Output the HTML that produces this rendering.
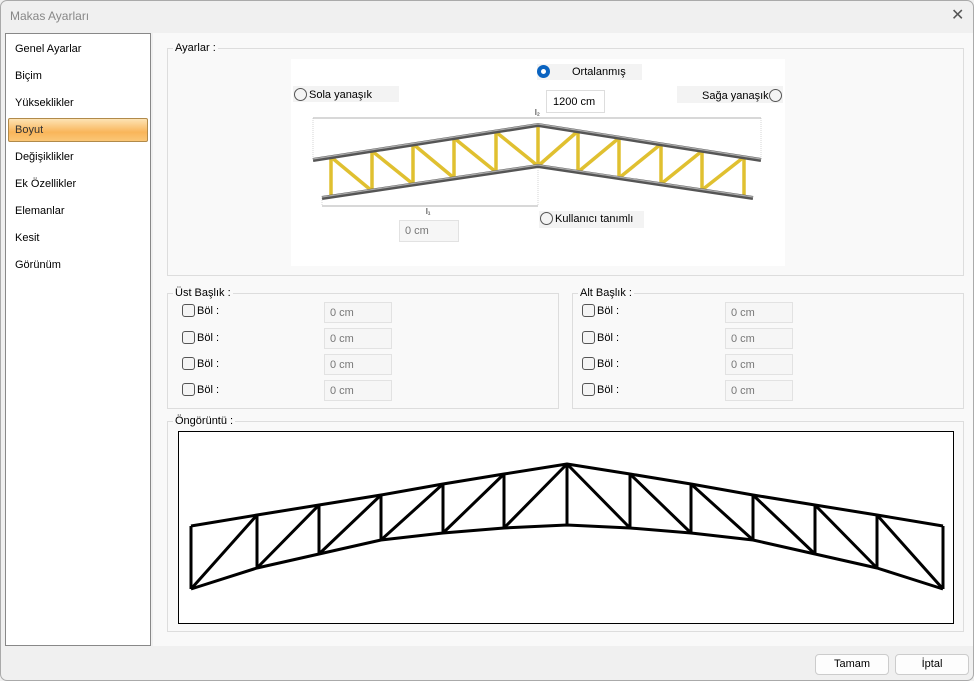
<!DOCTYPE html>
<html><head><meta charset="utf-8"><style>
*{box-sizing:border-box;margin:0;padding:0}
body{width:974px;height:681px;overflow:hidden;background:#f0f0f0;font-family:"Liberation Sans","DejaVu Sans",sans-serif;font-size:11px;color:#000;position:relative}
.a{position:absolute}
.win{left:0;top:0;width:974px;height:681px;border:1px solid #aaa;border-radius:7px;background:#f0f0f0;overflow:hidden}
.title{left:9px;top:8px;font-size:12px;color:#888}
.x{left:950px;top:4px;font-size:16px;color:#555}
.side{left:4px;top:32px;width:146px;height:613px;background:#fff;border:1px solid #888}
.item{left:9px;font-size:11px}
.sel{left:2px;top:84px;width:140px;height:24px;border:1px solid #b18a4a;border-radius:2px;background:linear-gradient(#fde3b4,#f9b55a 60%,#fbc777)}
.main{left:152px;top:32px;width:822px;height:613px;background:#f9f9f9}
.grp{border:1px solid #ddd}
.lbl{background:#f9f9f9;padding:0 2px;font-size:11px}
.in{border:1px solid #e2e2e2;background:#f6f6f6;color:#777;font-size:11px;padding:5px 5px;height:21px;line-height:10px}
.cb{width:13px;height:13px;border:1px solid #555;border-radius:3px;background:#f4f4f4}
.rad{width:13px;height:13px;border:1px solid #555;border-radius:50%;background:#f4f4f4}
.btn{width:74px;height:21px;border:1px solid #ccc;border-radius:4px;background:#fdfdfd;text-align:center;line-height:19px;font-size:11px}
</style></head><body>
<div class="a win">
<div class="a title">Makas Ayarları</div>
<div class="a x">✕</div>
<div class="a side">
 <div class="a sel"></div>
 <div class="a item" style="top:9px">Genel Ayarlar</div>
 <div class="a item" style="top:36px">Biçim</div>
 <div class="a item" style="top:63px">Yükseklikler</div>
 <div class="a item" style="top:90px;color:#333">Boyut</div>
 <div class="a item" style="top:117px">Değişiklikler</div>
 <div class="a item" style="top:144px">Ek Özellikler</div>
 <div class="a item" style="top:171px">Elemanlar</div>
 <div class="a item" style="top:198px">Kesit</div>
 <div class="a item" style="top:225px">Görünüm</div>
</div>
<div class="a main"></div>
<div class="a grp" style="left:166px;top:47px;width:797px;height:228px"></div>
<div class="a lbl" style="left:172px;top:41px">Ayarlar :</div>
<div class="a" style="left:290px;top:58px;width:494px;height:207px;background:#fff"></div>
<div class="a" style="left:536px;top:63px;width:105px;height:16px;background:#f3f3f3"></div>
<div class="a" style="left:536px;top:64px;width:13px;height:13px;border-radius:50%;background:#0a63c0"><div class="a" style="left:4px;top:4px;width:5px;height:5px;border-radius:50%;background:#fff"></div></div>
<div class="a" style="left:571px;top:65px;font-size:11px">Ortalanmış</div>
<div class="a" style="left:292px;top:85px;width:106px;height:16px;background:#f3f3f3"></div>
<div class="a rad" style="left:293px;top:87px"></div>
<div class="a" style="left:308px;top:88px;font-size:11px">Sola yanaşık</div>
<div class="a" style="left:676px;top:85px;width:106px;height:17px;background:#f3f3f3"></div>
<div class="a rad" style="left:768px;top:88px"></div>
<div class="a" style="left:701px;top:89px;font-size:11px">Sağa yanaşık</div>
<div class="a" style="left:545px;top:89px;width:59px;height:23px;background:#fff;border:1px solid #ddd;font-size:11px;padding:5px 6px">1200 cm</div>
<div class="a" style="left:538px;top:210px;width:105px;height:17px;background:#f3f3f3"></div>
<div class="a rad" style="left:539px;top:211px"></div>
<div class="a" style="left:554px;top:212px;font-size:11px">Kullanıcı tanımlı</div>
<div class="a in" style="left:398px;top:219px;width:60px;height:22px">0 cm</div>
<svg class="a" style="left:0;top:0" width="974" height="681">
 <g stroke="#999" stroke-width="0.7" fill="none">
  <line x1="312" y1="117" x2="760" y2="117"/>
  <line x1="321" y1="205" x2="537" y2="205"/>
 </g>
 <g stroke="#bbb" stroke-width="0.6" stroke-dasharray="1 1" fill="none">
  <line x1="312" y1="117" x2="312" y2="158"/><line x1="760" y1="117" x2="760" y2="158"/><line x1="537" y1="165" x2="537" y2="205"/><line x1="321" y1="197" x2="321" y2="205"/>
 </g>
 <text x="534" y="114" font-size="8" font-family="Liberation Sans">l₂</text>
 <text x="425" y="213" font-size="8" font-family="Liberation Sans">l₁</text>
 <g stroke="#e0c030" stroke-width="3.5">
  <line x1="330" y1="156" x2="330" y2="196"/><line x1="371" y1="150" x2="371" y2="190"/><line x1="412" y1="143" x2="412" y2="183"/><line x1="453" y1="137" x2="453" y2="177"/><line x1="495" y1="131" x2="495" y2="171"/><line x1="537" y1="124" x2="537" y2="165"/>
  <line x1="577" y1="130" x2="577" y2="171"/><line x1="618" y1="137" x2="618" y2="177"/><line x1="660" y1="143" x2="660" y2="183"/><line x1="701" y1="150" x2="701" y2="189"/><line x1="743" y1="156" x2="743" y2="196"/>
  <line x1="330" y1="156" x2="371" y2="190"/><line x1="371" y1="150" x2="412" y2="183"/><line x1="412" y1="143" x2="453" y2="177"/><line x1="453" y1="137" x2="495" y2="171"/><line x1="495" y1="131" x2="537" y2="165"/>
  <line x1="537" y1="165" x2="577" y2="130"/><line x1="577" y1="171" x2="618" y2="137"/><line x1="618" y1="177" x2="660" y2="143"/><line x1="660" y1="183" x2="701" y2="150"/><line x1="701" y1="189" x2="743" y2="156"/>
 </g>
 <g stroke="#555" stroke-width="4" fill="none">
  <polyline points="312,159 537,124 760,159"/><polyline points="321,197 537,165 752,197"/>
 </g>
 <g stroke="#aaa" stroke-width="1.3" fill="none">
  <polyline points="312,158 537,123 760,158"/><polyline points="321,196 537,164 752,196"/>
 </g>
</svg>
<div class="a grp" style="left:166px;top:292px;width:392px;height:116px"></div>
<div class="a lbl" style="left:172px;top:286px">Üst Başlık :</div>
<div class="a grp" style="left:571px;top:292px;width:392px;height:116px"></div>
<div class="a lbl" style="left:577px;top:286px">Alt Başlık :</div>
<div class="a cb" style="left:181px;top:303px"></div><div class="a" style="left:196px;top:304px">Böl :</div><div class="a in" style="left:323px;top:301px;width:68px">0 cm</div>
<div class="a cb" style="left:181px;top:330px"></div><div class="a" style="left:196px;top:331px">Böl :</div><div class="a in" style="left:323px;top:327px;width:68px">0 cm</div>
<div class="a cb" style="left:181px;top:356px"></div><div class="a" style="left:196px;top:357px">Böl :</div><div class="a in" style="left:323px;top:353px;width:68px">0 cm</div>
<div class="a cb" style="left:181px;top:382px"></div><div class="a" style="left:196px;top:383px">Böl :</div><div class="a in" style="left:323px;top:379px;width:68px">0 cm</div>
<div class="a cb" style="left:581px;top:303px"></div><div class="a" style="left:596px;top:304px">Böl :</div><div class="a in" style="left:724px;top:301px;width:68px">0 cm</div>
<div class="a cb" style="left:581px;top:330px"></div><div class="a" style="left:596px;top:331px">Böl :</div><div class="a in" style="left:724px;top:327px;width:68px">0 cm</div>
<div class="a cb" style="left:581px;top:356px"></div><div class="a" style="left:596px;top:357px">Böl :</div><div class="a in" style="left:724px;top:353px;width:68px">0 cm</div>
<div class="a cb" style="left:581px;top:382px"></div><div class="a" style="left:596px;top:383px">Böl :</div><div class="a in" style="left:724px;top:379px;width:68px">0 cm</div>
<div class="a grp" style="left:166px;top:420px;width:797px;height:211px"></div>
<div class="a lbl" style="left:172px;top:414px">Öngörüntü :</div>
<div class="a" style="left:177px;top:430px;width:776px;height:193px;background:#fff;border:1px solid #000"></div>
<svg class="a" style="left:0;top:0" width="974" height="681">
 <g stroke="#000" stroke-width="3" fill="none" stroke-linejoin="round">
  <polyline points="190,525 256,514 318,504 380,494 442,483 503,473 566,463 629,473 690,483 752,494 814,504 876,514 942,525"/>
  <polyline points="190,588 256,567 318,553 380,539 442,532 503,527 566,524 629,527 690,532 752,539 814,553 876,567 942,588"/>
  <line x1="190" y1="525" x2="190" y2="588"/><line x1="256" y1="514" x2="256" y2="567"/><line x1="318" y1="504" x2="318" y2="553"/><line x1="380" y1="494" x2="380" y2="539"/><line x1="442" y1="483" x2="442" y2="532"/><line x1="503" y1="473" x2="503" y2="527"/><line x1="566" y1="463" x2="566" y2="524"/>
  <line x1="629" y1="473" x2="629" y2="527"/><line x1="690" y1="483" x2="690" y2="532"/><line x1="752" y1="494" x2="752" y2="539"/><line x1="814" y1="504" x2="814" y2="553"/><line x1="876" y1="514" x2="876" y2="567"/><line x1="942" y1="525" x2="942" y2="588"/>
  <line x1="190" y1="588" x2="256" y2="514"/><line x1="256" y1="567" x2="318" y2="504"/><line x1="318" y1="553" x2="380" y2="494"/><line x1="380" y1="539" x2="442" y2="483"/><line x1="442" y1="532" x2="503" y2="473"/><line x1="503" y1="527" x2="566" y2="463"/>
  <line x1="566" y1="463" x2="629" y2="527"/><line x1="629" y1="473" x2="690" y2="532"/><line x1="690" y1="483" x2="752" y2="539"/><line x1="752" y1="494" x2="814" y2="553"/><line x1="814" y1="504" x2="876" y2="567"/><line x1="876" y1="514" x2="942" y2="588"/>
 </g>
</svg>
<div class="a btn" style="left:814px;top:653px">Tamam</div>
<div class="a btn" style="left:894px;top:653px">İptal</div>
</div>
</body></html>
